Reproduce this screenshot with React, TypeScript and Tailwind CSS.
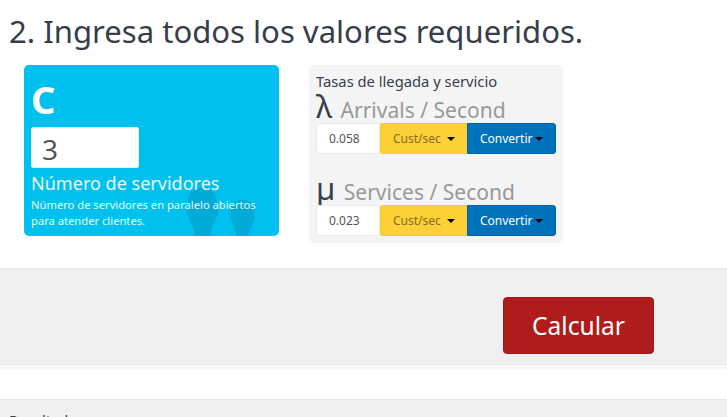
function Caret() {
  return (
    <svg width="8" height="4" viewBox="0 0 8 4" className="shrink-0">
      <path d="M0 0h8L4 4z" fill="#000" />
    </svg>
  );
}

function Rate({ symbol, label, value }: { symbol: string; label: string; value: string }) {
  return (
    <div>
      <div className="-mt-px flex h-[32px] items-baseline gap-[8.4px] whitespace-nowrap leading-[31px]">
        <span className="text-[31px] text-[#373e4a]">{symbol}</span>
        <span className="text-[21.05px] text-[#999]">{label}</span>
      </div>
      <div className="flex h-[31px] w-[240px] text-[12px]">
        <input
          className="w-[64px] rounded-l-[3px] border border-[#ebebeb] bg-white pl-3 text-[#555] outline-none"
          defaultValue={value}
        />
        <button className="flex w-[87px] items-center gap-[6px] rounded-l-[3px] border border-r-0 border-[#fcca1c] bg-[#fcd036] pl-[12px] text-[#846e20]">
          Cust/sec <Caret />
        </button>
        <button className="flex w-[89px] items-center gap-[3px] rounded-r-[3px] border border-[#0063ad] bg-[#0072bc] pl-[12px] text-white">
          Convertir <Caret />
        </button>
      </div>
    </div>
  );
}

export default function App() {
  return (
    <div className="h-[417px] w-[727px] overflow-hidden bg-white font-['Noto_Sans',sans-serif] text-[#373e4a]">
      <h2 className="h-[65px] whitespace-nowrap pl-[9px] pt-[11px] text-[31.08px] leading-[40px]">
        2. Ingresa todos los valores requeridos.
      </h2>
      <div className="flex h-[203px] items-start gap-[30px] pl-6">
        <section className="relative h-[171px] w-[255px] overflow-hidden rounded-[5px] bg-[#00c0ef] px-[7px] text-white">
          <svg className="absolute bottom-0 left-[160px]" width="75" height="50" viewBox="0 0 75 50" fill="#00abd7">
            <path d="M11 50C10 44 9 40 7 37C6 35 5 34 5 31C2 29 1 25 4 23C2 9 8 1 18 1S35 9 33 23C36 25 35 29 32 31C32 34 31 35 30 37C28 41 27 44 27 50Z" />
            <path d="M52 50C52 46 51 44 49 40C48 38 48 37 48 36C45 34 45 31 47 29C45 19 49 14 58 14S72 19 70 29C72 31 71 34 69 36C69 37 69 38 68 40C66 44 65 46 64 50Z" />
          </svg>
          <div className="relative">
            <div className="h-[62px] pt-[8px] text-[38px] font-bold leading-[52px]">C</div>
            <input
              className="block h-[41px] w-[108px] rounded-[2px] border border-[#ebebeb] bg-white pl-[10px] pt-[3px] text-[28px] text-[#555] outline-none"
              defaultValue="3"
            />
            <h3 className="h-[29px] whitespace-nowrap pt-[3px] text-[18.05px] leading-[24px] text-white/90">Número de servidores</h3>
            <p className="whitespace-nowrap text-[11.2px] leading-[16px] text-white/90">
              Número de servidores en paralelo abiertos
              <br />
              para atender clientes.
            </p>
          </div>
        </section>
        <section className="h-[178px] w-[254px] rounded-[5px] bg-[#f4f4f4] px-[7px]">
          <h4 className="h-[27px] whitespace-nowrap pt-[6px] text-[14.75px] leading-[21px]">Tasas de llegada y servicio</h4>
          <div className="flex flex-col gap-[20px]">
            <Rate symbol="λ" label="Arrivals / Second" value="0.058" />
            <Rate symbol="µ" label="Services / Second" value="0.023" />
          </div>
        </section>
      </div>
      <div className="h-[97px] border-y border-[#e7e7e7] bg-[#efefef] pl-[503px] pt-[28px]">
        <button className="block h-[57px] w-[151px] rounded-[4px] border border-[#a01919] bg-[#b01c1c] pt-[2px] text-[24.6px] text-white">
          Calcular
        </button>
      </div>
      <div className="h-[4px] bg-[#f7f7f7]" />
      <div className="mt-[30px] h-[60px] border-t border-[#e7e7e7] bg-[#efefef] pl-[9px] pt-[10px] text-[14.5px] leading-[20px]">
        Resultados
      </div>
    </div>
  );
}
